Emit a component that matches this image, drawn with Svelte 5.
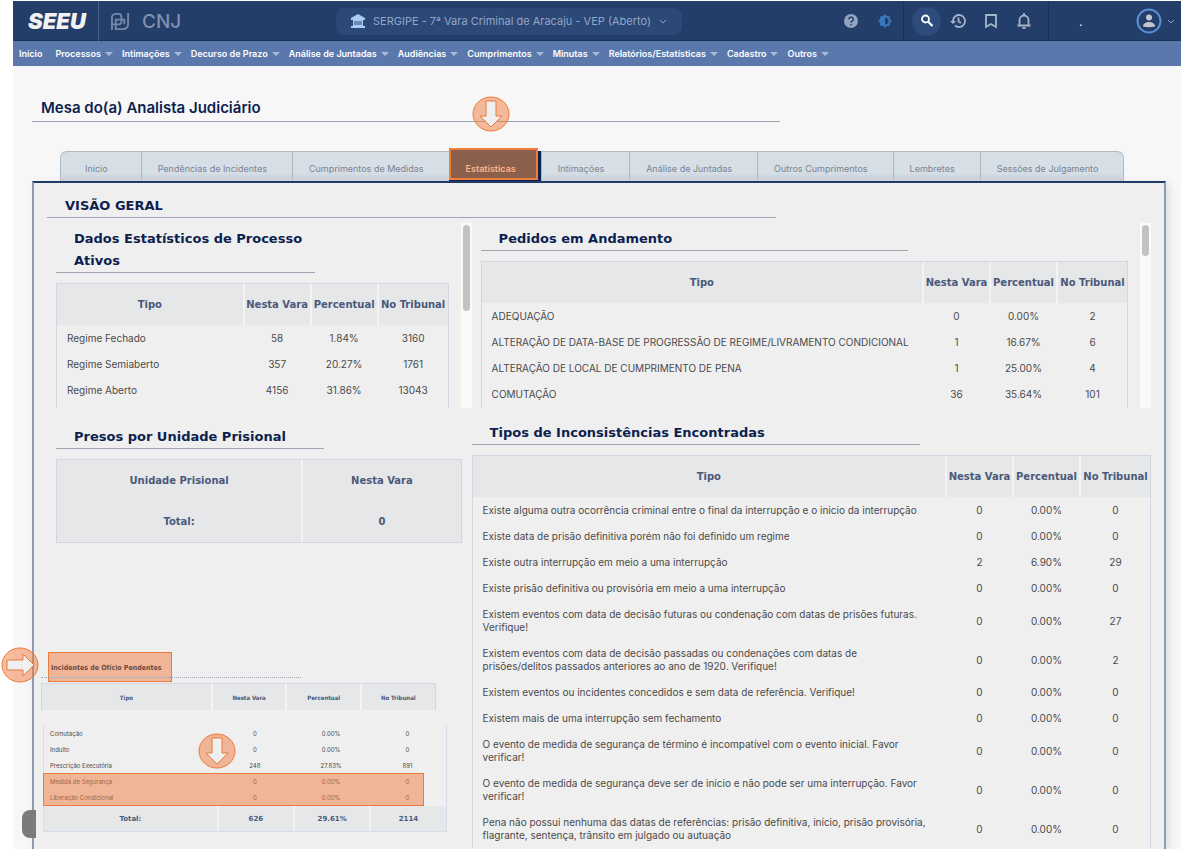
<script>
	const menu = [
		"Início",
		"Processos",
		"Intimações",
		"Decurso de Prazo",
		"Análise de Juntadas",
		"Audiências",
		"Cumprimentos",
		"Minutas",
		"Relatórios/Estatísticas",
		"Cadastro",
		"Outros",
	];

	const tabs = [
		"Início",
		"Pendências de Incidentes",
		"Cumprimentos de Medidas",
		"Estatísticas",
		"Intimações",
		"Análise de Juntadas",
		"Outros Cumprimentos",
		"Lembretes",
		"Sessões de Julgamento",
	];

	let activeTab = $state("Estatísticas");

	const ativos = [
		["Regime Fechado", "58", "1.84%", "3160"],
		["Regime Semiaberto", "357", "20.27%", "1761"],
		["Regime Aberto", "4156", "31.86%", "13043"],
	];

	const pedidos = [
		["ADEQUAÇÃO", "0", "0.00%", "2"],
		["ALTERAÇÃO DE DATA-BASE DE PROGRESSÃO DE REGIME/LIVRAMENTO CONDICIONAL", "1", "16.67%", "6"],
		["ALTERAÇÃO DE LOCAL DE CUMPRIMENTO DE PENA", "1", "25.00%", "4"],
		["COMUTAÇÃO", "36", "35.64%", "101"],
	];

	const inconsistencias = [
		["Existe alguma outra ocorrência criminal entre o final da interrupção e o inicio da interrupção", "0", "0.00%", "0"],
		["Existe data de prisão definitiva porém não foi definido um regime", "0", "0.00%", "0"],
		["Existe outra interrupção em meio a uma interrupção", "2", "6.90%", "29"],
		["Existe prisão definitiva ou provisória em meio a uma interrupção", "0", "0.00%", "0"],
		["Existem eventos com data de decisão futuras ou condenação com datas de prisões futuras. Verifique!", "0", "0.00%", "27"],
		["Existem eventos com data de decisão passadas ou condenações com datas de prisões/delitos passados anteriores ao ano de 1920. Verifique!", "0", "0.00%", "2"],
		["Existem eventos ou incidentes concedidos e sem data de referência. Verifique!", "0", "0.00%", "0"],
		["Existem mais de uma interrupção sem fechamento", "0", "0.00%", "0"],
		["O evento de medida de segurança de término é incompatível com o evento inicial. Favor verificar!", "0", "0.00%", "0"],
		["O evento de medida de segurança deve ser de início e não pode ser uma interrupção. Favor verificar!", "0", "0.00%", "0"],
		["Pena não possui nenhuma das datas de referências: prisão definitiva, início, prisão provisória, flagrante, sentença, trânsito em julgado ou autuação", "0", "0.00%", "0"],
	];

	const incidentes = [
		["Comutação", "0", "0.00%", "0"],
		["Indulto", "0", "0.00%", "0"],
		["Prescrição Executória", "248", "27.83%", "891"],
		["Medida de Segurança", "0", "0.00%", "0"],
		["Liberação Condicional", "0", "0.00%", "0"],
	];
</script>

{#snippet statsTable(rows)}
	<table class="stats">
		<thead>
			<tr>
				<th>Tipo</th>
				<th class="num">Nesta Vara</th>
				<th class="num">Percentual</th>
				<th class="last">No Tribunal</th>
			</tr>
		</thead>
		<tbody>
			{#each rows as row}
				<tr>
					{#each row as cell}
						<td>{cell}</td>
					{/each}
				</tr>
			{/each}
		</tbody>
	</table>
{/snippet}

{#snippet marker(dir)}
	<svg class="marker {dir}" viewBox="0 0 38 36" aria-hidden="true">
		<ellipse cx="19" cy="18" rx="18" ry="17" />
		{#if dir === "right"}
			<path d="M6 13h16V7l11 11-11 11v-6H6z" />
		{:else}
			<path d="M14 5h10v15h6L19 31 8 20h6z" />
		{/if}
	</svg>
{/snippet}

<div class="app">
	<header class="topbar">
		<a class="brand" href="#inicio">SEEU</a>
		<div class="orgs">
			<svg class="pj" viewBox="0 0 20 20" aria-hidden="true">
				<path d="M1 19V6a4 4 0 0 1 4-4h3a3 3 0 0 1 3 3v3M5 19V8h6M1 13h7a3 3 0 0 0 3-3V8M5 18h8a5 5 0 0 0 5-5V1M11 8h3v5" />
			</svg>
			<span class="cnj">CNJ</span>
		</div>
		<label class="court">
			<svg class="bank" viewBox="0 0 14 14" aria-hidden="true">
				<path d="M7 0 0 4v2h14V4zM2 6h10v6H2zM0 12h14v2H0z" />
				<path class="cols" d="M4 7v4M6 7v4M8 7v4M10 7v4" />
			</svg>
			<select aria-label="Vara">
				<option>SERGIPE - 7ª Vara Criminal de Aracaju - VEP (Aberto)</option>
			</select>
			<svg class="chevron" viewBox="0 0 8 5" aria-hidden="true"><path d="m1 1 3 3 3-3" /></svg>
		</label>
		<div class="tools help">
			<button aria-label="Ajuda">
				<svg viewBox="0 0 16 16">
					<circle cx="8" cy="8" r="7" fill="#93a3c2" />
					<path d="M5.8 6.2a2.2 2.2 0 1 1 3.4 1.9C8.4 8.6 8 8.9 8 9.8M8 11v1.5" stroke="#233e69" stroke-width="1.5" />
				</svg>
			</button>
			<button aria-label="Contraste">
				<svg viewBox="0 0 16 16">
					<path d="M8 1l2 2.2h2.8V6L15 8l-2.2 2v2.8H10L8 15l-2-2.2H3.2V10L1 8l2.2-2V3.2H6z" fill="#3a78c2" />
					<path d="M8 4.5a3.5 3.5 0 0 1 0 7z" fill="#233e69" />
				</svg>
			</button>
		</div>
		<div class="tools actions">
			<button class="search" aria-label="Pesquisar">
				<svg viewBox="0 0 16 16">
					<circle cx="6.5" cy="6" r="3.5" stroke="#fff" stroke-width="1.8" />
					<path d="m9 8.5 4.5 4.5" stroke="#fff" stroke-width="2.2" />
				</svg>
			</button>
			<button aria-label="Histórico">
				<svg viewBox="0 0 16 16" stroke="#a7b3ca" stroke-width="1.8">
					<path d="M3 8a6 6 0 1 1 2 4.5M8.5 4.5v4l2.5 1.5" />
					<path d="M0 8h6l-3 3z" fill="#a7b3ca" stroke="none" />
				</svg>
			</button>
			<button aria-label="Favoritos">
				<svg viewBox="0 0 16 16" stroke="#a7b3ca" stroke-width="1.8">
					<path d="M3 2h10v12l-5-3-5 3z" />
				</svg>
			</button>
			<button aria-label="Notificações">
				<svg viewBox="0 0 16 16" stroke="#a7b3ca" stroke-width="1.8">
					<path d="M1.5 12.5h13M3.5 12V7a4.5 4.5 0 0 1 9 0v5M8 2.5V0M6.5 15h3" />
				</svg>
			</button>
		</div>
		<div class="user">
			<span class="name">.</span>
			<button aria-label="Usuário">
				<svg class="avatar" viewBox="0 0 26 26">
					<circle cx="13" cy="13" r="11.5" stroke="#5b8fd6" stroke-width="2" />
					<circle cx="13" cy="9.5" r="3" fill="#c3c6cc" />
					<path d="M7 18.5c0-6 12-6 12 0q-6 1.5-12 0z" fill="#c3c6cc" />
				</svg>
				<svg class="chevron" viewBox="0 0 8 5"><path d="m1 1 3 3 3-3" /></svg>
			</button>
		</div>
	</header>

	<nav class="menu">
		{#each menu as item, i}
			<a href="#{i}">{item}{#if i > 0}<span class="caret"></span>{/if}</a>
		{/each}
	</nav>

	<main>
		<h1>Mesa do(a) Analista Judiciário</h1>

		<div class="tabs" role="tablist">
			{#each tabs as tab}
				<button
					role="tab"
					class:active={tab === activeTab}
					aria-selected={tab === activeTab}
					onclick={() => (activeTab = tab)}
				>
					{tab}
					{#if tab === "Estatísticas"}
						<span class="tab-mark"></span>
						{@render marker("down")}
					{/if}
				</button>
			{/each}
		</div>

		<section class="panel">
			<h2>VISÃO GERAL</h2>
			<div class="columns">
				<div class="col">
					<div class="pane">
						<div class="pane-body">
							<h3>Dados Estatísticos de Processo Ativos</h3>
							{@render statsTable(ativos)}
						</div>
						<div class="scroll"><div class="thumb long"></div></div>
					</div>

					<div class="prisional">
						<h3>Presos por Unidade Prisional</h3>
						<table class="stats units">
							<thead>
								<tr><th>Unidade Prisional</th><th class="vara">Nesta Vara</th></tr>
							</thead>
							<tfoot>
								<tr><th>Total:</th><th>0</th></tr>
							</tfoot>
						</table>
					</div>

					<div class="incidentes">
						{@render marker("right")}
						<h4>Incidentes de Ofício Pendentes</h4>
						<table class="small head">
							<thead>
								<tr><th>Tipo</th><th>Nesta Vara</th><th>Percentual</th><th>No Tribunal</th></tr>
							</thead>
						</table>
						<table class="small body">
							<tbody>
								{#each incidentes as row}
									<tr>
										{#each row as cell}
											<td>{cell}</td>
										{/each}
									</tr>
								{/each}
							</tbody>
							<tfoot>
								<tr><th>Total:</th><th>626</th><th>29.61%</th><th>2114</th></tr>
							</tfoot>
						</table>
						<div class="rows-mark">{@render marker("down")}</div>
						<div class="handle"></div>
					</div>
				</div>

				<div class="col">
					<div class="pane">
						<div class="pane-body">
							<h3>Pedidos em Andamento</h3>
							{@render statsTable(pedidos)}
						</div>
						<div class="scroll"><div class="thumb"></div></div>
					</div>

					<div class="tipos">
						<h3>Tipos de Inconsistências Encontradas</h3>
						{@render statsTable(inconsistencias)}
					</div>
				</div>
			</div>
		</section>
	</main>
</div>

<style>
	:global(body) {
		margin: 0;
		background: #fff;
	}

	.app {
		box-sizing: border-box;
		min-height: 100vh;
		display: flex;
		flex-direction: column;
		padding: 1px 0 0 13px;
		font-family: Inter, "Liberation Sans", sans-serif;
		font-size: 10px;
		color: #4a4a4a;
		overflow: hidden;
	}

	button {
		border: none;
		padding: 0;
		background: none;
		font: inherit;
		color: inherit;
		cursor: pointer;
	}

	a {
		color: inherit;
		text-decoration: none;
	}

	svg {
		display: block;
		fill: none;
	}

	.topbar {
		display: flex;
		align-items: center;
		height: 40px;
		background: #233e69;
		box-shadow: inset 0 -1px #1b3055;
	}

	.topbar > div {
		box-sizing: border-box;
		display: flex;
		align-items: center;
		height: 40px;
	}

	.brand {
		box-sizing: border-box;
		width: 86px;
		padding-left: 15px;
		line-height: 40px;
		border-right: 1px solid #46608a;
		font-size: 22px;
		font-weight: 900;
		font-style: italic;
		color: #f2f2f2;
	}

	.orgs {
		width: 237px;
		padding-left: 12px;
		gap: 12px;
	}

	.pj {
		width: 19px;
		height: 19px;
		stroke: #7487aa;
		stroke-width: 2;
	}

	.cnj {
		font-size: 19px;
		font-weight: 500;
		color: #7f90b0;
	}

	.court {
		box-sizing: border-box;
		display: flex;
		align-items: center;
		width: 346px;
		height: 27px;
		padding-left: 15px;
		border-radius: 8px;
		background: #2b4876;
	}

	.court select {
		appearance: none;
		border: none;
		padding: 0 8px;
		background: none;
		font: 11px Inter, sans-serif;
		color: #93a5c6;
	}

	.bank {
		width: 14px;
		height: 14px;
		fill: #a8cdf0;
	}

	.bank .cols {
		stroke: #2b4876;
		stroke-width: 1;
	}

	.chevron {
		width: 8px;
		height: 5px;
		stroke: #93a5c6;
	}

	.tools svg {
		width: 16px;
		height: 16px;
	}

	.tools button {
		display: grid;
		place-items: center;
	}

	.help {
		margin-left: auto;
		gap: 18px;
		padding-right: 10px;
	}

	.actions {
		gap: 17px;
		padding: 0 16px 0 8px;
		border-left: 1px solid #1b3157;
		border-right: 1px solid #1b3157;
	}

	.actions .search {
		width: 29px;
		height: 29px;
		margin-right: -8px;
		border-radius: 50%;
		background: #2d4b7b;
	}

	.user {
		width: 132px;
		justify-content: space-between;
		padding: 0 6px 0 30px;
	}

	.user button {
		display: flex;
		align-items: center;
		gap: 5px;
	}

	.name {
		color: #fff;
		font-size: 12px;
	}

	.avatar {
		width: 26px;
		height: 26px;
	}

	.menu {
		display: flex;
		align-items: center;
		gap: 9px;
		height: 25px;
		padding-left: 6px;
		background: #5a78ac;
		font-size: 9px;
		font-weight: 600;
		color: #fff;
	}

	.menu a {
		display: flex;
		align-items: center;
		gap: 4px;
		white-space: nowrap;
	}

	.menu a:first-child {
		margin-right: 4px;
	}

	.caret {
		border: 4px solid transparent;
		border-top-color: #a9b9d6;
		border-bottom: none;
	}

	main {
		flex: 1;
		display: flex;
		flex-direction: column;
		padding: 28px 15px 0 19px;
		background: #f7f7f8;
	}

	h1,
	h2,
	h3,
	h4 {
		box-sizing: border-box;
		width: 66%;
		margin: 0;
		border-bottom: 1px solid #9ea5b5;
		color: #0d1f4f;
	}

	h1 {
		padding-left: 9px;
		font-size: 15px;
		font-weight: 600;
		line-height: 27px;
	}

	.tabs {
		display: flex;
		align-self: flex-start;
		height: 30px;
		margin: 29px 0 0 28px;
	}

	.tabs button {
		position: relative;
		box-sizing: border-box;
		padding: 3px 25px 0 16px;
		border-top: 1px solid #b0b8c2;
		border-left: 1px solid #b0b8c2;
		background: linear-gradient(#d6dee6 70%, #c6ced7);
		font-size: 9px;
		color: #7b8492;
		white-space: nowrap;
	}

	.tabs button:first-child {
		padding: 3px 33px 0 24px;
		border-radius: 7px 0 0;
	}

	.tabs button:last-child {
		border-right: 1px solid #b0b8c2;
		border-radius: 0 7px 0 0;
	}

	.tabs button.active {
		background: #0d2250;
		border-color: #0d2250;
		color: #f8b58c;
		font-weight: 600;
	}

	/* sits behind the label but over the tab's own background */
	.tab-mark {
		position: absolute;
		inset: -4px 3px 1px -1px;
		z-index: -1;
		border: 2px solid #ef7d3b;
	}

	.tabs .active {
		z-index: 1;
	}

	.tabs .active .tab-mark {
		background: #8a5f4b;
	}

	.marker {
		position: absolute;
		width: 38px;
		height: 36px;
		stroke: #ec7a38;
		stroke-width: 1;
	}

	.marker ellipse {
		fill: rgba(240, 124, 60, 0.5);
	}

	.marker path {
		fill: #efefef;
	}

	.tabs .marker {
		left: 22px;
		bottom: 49px;
	}

	.panel {
		flex: 1;
		padding: 12px 13px 0;
		border: 2px solid #8e99b3;
		border-top-color: #223a66;
		border-bottom: none;
		background: #efeff0;
		box-shadow: 3px 3px 8px #dcdde2;
	}

	h2,
	h3 {
		font-family: "DejaVu Sans", sans-serif;
		font-size: 13px;
		font-weight: 700;
		line-height: 22px;
		padding-left: 18px;
	}

	.columns {
		display: grid;
		grid-template-columns: minmax(0, 5fr) minmax(0, 8fr);
	}

	h3 {
		margin-bottom: 10px;
	}

	.pane {
		display: flex;
		height: 185px;
		margin-top: 5px;
		overflow: hidden;
	}

	.pane-body {
		flex: 1;
		padding: 5px 12px 0 9px;
	}

	.scroll {
		width: 11px;
		padding-top: 2px;
		background: #fafafa;
	}

	.thumb {
		width: 7px;
		height: 31px;
		margin: 0 auto;
		border-radius: 4px;
		background: #c2c2c4;
	}

	.long {
		height: 86px;
	}

	table {
		width: 100%;
		table-layout: fixed;
		border-collapse: separate;
		border-spacing: 0;
	}

	.stats {
		border: 1px solid #d3d5e3;
		border-bottom: none;
	}

	.stats th {
		height: 41px;
		padding: 0;
		background: #e5e7e9;
		font: 700 10px "DejaVu Sans", sans-serif;
		color: #4b597a;
		white-space: nowrap;
	}

	th + th {
		border-left: 2px solid #f3f4f6;
	}

	.stats .num {
		width: 65px;
	}

	.stats .last {
		width: 69px;
	}

	.stats td {
		padding: 7px 0 6px;
		line-height: 13px;
		text-align: center;
	}

	.stats td + td {
		padding-left: 2px;
	}

	.stats td:first-child {
		padding-left: 10px;
		padding-right: 17px;
		text-align: left;
	}

	.pane .stats td:first-child {
		padding-right: 0;
	}

	.pane tr:last-child td {
		padding-bottom: 16px;
	}

	.prisional {
		padding: 18px 10px 0 9px;
	}

	.units {
		border-bottom: 1px solid #d3d5e3;
	}

	.stats .vara {
		width: 39%;
	}

	.tipos {
		padding-top: 14px;
	}

	.incidentes {
		position: relative;
		margin: 109px 36px 0 -6px;
	}

	.incidentes h4 {
		width: 66%;
		height: 26px;
		padding-left: 10px;
		border-bottom: 1px dotted #9ea5b5;
		font: 700 7px/32px "DejaVu Sans Condensed", "DejaVu Sans", sans-serif;
		color: #6f4a42;
	}

	.incidentes h4::before {
		content: "";
		position: absolute;
		top: 0;
		left: 7px;
		width: 122px;
		height: 28px;
		border: 1px solid #ec7a38;
		background: rgba(240, 124, 60, 0.5);
		z-index: -1;
	}

	.incidentes,
	.panel {
		isolation: isolate;
	}

	.incidentes > .marker {
		left: -40px;
		top: -5px;
	}

	.small th,
	.small td {
		box-sizing: border-box;
	}

	.small th {
		height: 26px;
		padding: 0;
		background: #e5e7e9;
		font: 700 6px "DejaVu Sans Condensed", "DejaVu Sans", sans-serif;
		color: #4b597a;
	}

	.small th:first-child,
	.small td:first-child {
		width: 43%;
	}

	.small.head {
		margin-top: 5px;
		border: 1px solid #d3d5e3;
		border-width: 1px 1px 0;
	}

	.small.body {
		width: calc(100% + 9px);
		margin: 16px 0 0 2px;
		border: 1px solid #d9daea;
		border-top: none;
	}

	.small td {
		padding: 4px 0;
		font-size: 6px;
		line-height: 8px;
		text-align: center;
	}

	.small td:first-child {
		padding-left: 6px;
		text-align: left;
	}

	.small tfoot th {
		height: 25px;
		font: 700 7px "DejaVu Sans", sans-serif;
	}

	.rows-mark {
		position: absolute;
		left: 2px;
		right: 12px;
		bottom: 26px;
		height: 31px;
		border: 1px solid #ec7a38;
		background: rgba(240, 124, 60, 0.5);
	}

	.rows-mark .marker {
		left: 154px;
		bottom: 36px;
	}

	.handle {
		position: absolute;
		left: -19px;
		bottom: -6px;
		width: 14px;
		height: 28px;
		border-radius: 8px 0 0 8px;
		background: #7b7b7d;
	}
</style>
